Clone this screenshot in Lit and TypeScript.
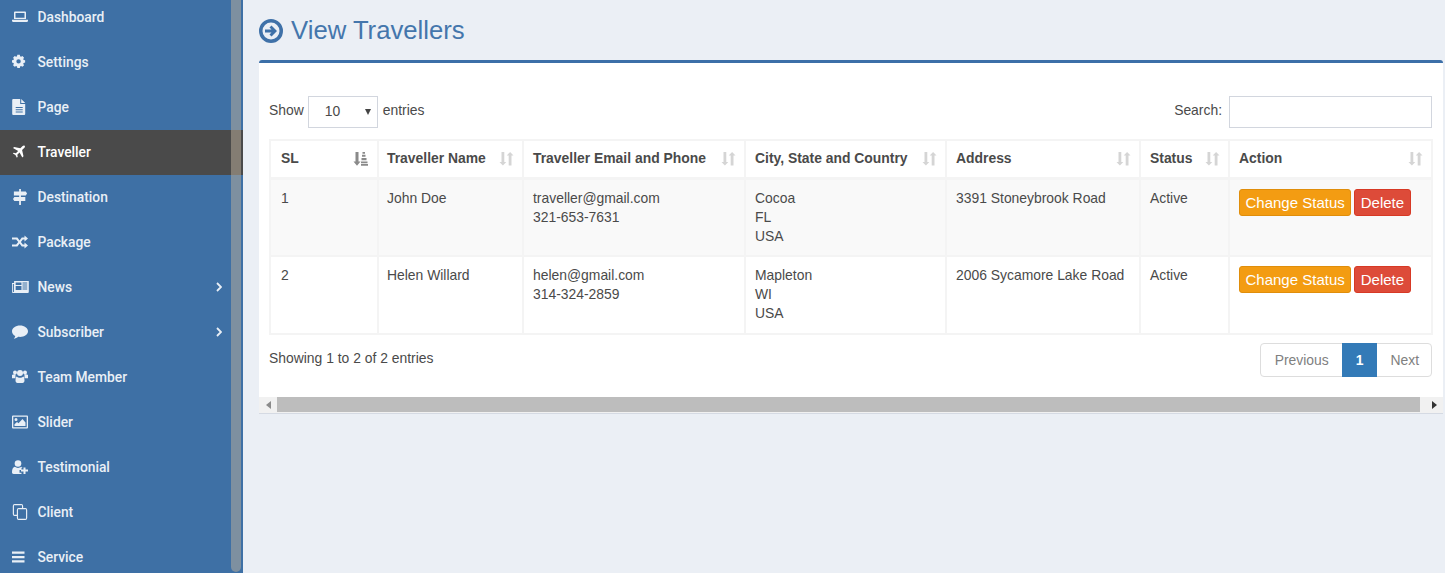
import { LitElement, html, css, svg } from "lit";
import { customElement } from "lit/decorators.js";

const icons: Record<string, unknown> = {
  laptop: svg`<path d="M3 2.500h10a1 1 0 0 1 1 1V10H2V3.500a1 1 0 0 1 1-1zM3.500 4v4.800h9V4zM0 10.800h16v1a1.300 1.300 0 0 1-1.300 1.200H1.300A1.300 1.300 0 0 1 0 11.800z" fill-rule="evenodd"/>`,
  cog: svg`<path fill-rule="evenodd" transform="translate(0 .8) scale(.82)" d="M6.500 0h3l.4 1.900 1.100.5 1.700-1 2 2.100-1 1.600.5 1.100 1.800.4v2.900l-1.800.4-.5 1.100 1 1.600-2 2.100-1.700-1-1.100.5-.4 1.800h-3l-.4-1.800-1.100-.5-1.700 1-2-2.100 1-1.600-.5-1.100L0 9.500V6.600l1.800-.4.5-1.100-1-1.600 2-2.100 1.700 1 1.100-.5zM8 5.300a2.700 2.700 0 1 0 0 5.400 2.700 2.700 0 0 0 0-5.400z"/>`,
  file: svg`<path fill-rule="evenodd" transform="translate(-.8 0)" d="M2 0h7v5h5v10a1 1 0 0 1-1 1H2a1 1 0 0 1-1-1V1a1 1 0 0 1 1-1zm8 0 4 4h-4zM4.500 8v1h7V8zm0 2.200v1h7v-1zm0 2.200v1h7v-1z"/>`,
  plane: svg`<path transform="translate(0 1) scale(.84)" d="M15 .8c.8.700.4 2-.5 2.900L12 6.100l1.700 7.300-1.400 1.400L9 8.900l-2.700 2.600.5 2.600-1 1-1.700-3.100L1 10.200l1-1 2.600.5L7.300 7 1.200 3.700l1.400-1.400 7.300 1.700L12.300 1.400c.9-.9 2-1.200 2.700-.6z"/>`,
  signs: svg`<path transform="translate(1 0) scale(.88 1)" d="M7 0h2v2.500h5.500l1.500 2-1.500 2H9v1.500h5v4H9V16H7v-4H1.500L0 10l1.500-2H7V6.500H1v-4h6z"/>`,
  random: svg`<path d="M12.500 1.500 16 4.500l-3.500 3V5.500h-1.700L8.900 8l1.900 2.500h1.700v-2L16 11.500l-3.500 3v-2h-2.700L7.600 9.600 5.400 12.500H0v-2h4.200L6.300 8 4.200 5.500H0v-2h5.400l2.200 2.900 2.200-2.900h2.700z"/>`,
  news: svg`<path fill-rule="evenodd" transform="scale(1.050 1)" d="M2 2h14v11a1 1 0 0 1-1 1H1a1 1 0 0 1-1-1V4h2zm1.500 1.500V6H9V3.500zm0 3.500v4H9V7zM10 3.500v1h4.500v-1zm0 2v1h4.500v-1zm0 2v1h4.500v-1zm0 2v1h4.500v-1zM.8 5v8h1V5z"/>`,
  comment: svg`<path d="M8 1.500c4.400 0 8 2.500 8 5.700s-3.600 5.700-8 5.700c-.6 0-1.200 0-1.800-.1C5 13.900 3.300 14.600 1.800 14.800c.7-.8 1.300-1.700 1.500-2.800C1.300 11 0 9.200 0 7.200 0 4 3.600 1.500 8 1.500z"/>`,
  users: svg`<circle cx="3" cy="3.500" r="2"/><circle cx="13" cy="3.500" r="2"/><circle cx="8" cy="4" r="3"/><path d="M0 6c.5-.5 1.400-.7 2.500-.7.600 0 .9.100 1.200.3-.3.900-.3 2.400-.1 3.600H0zM16 6c-.5-.5-1.400-.7-2.500-.7-.6 0-.9.100-1.200.3.300.9.300 2.400.1 3.600H16z"/><path d="M4.500 7.500c1 .8 2.200 1.300 3.500 1.300s2.500-.5 3.500-1.300c.7.500 1 2.500 1 4 0 1.200-.8 2.500-2 2.500h-5c-1.200 0-2-1.300-2-2.500 0-1.500.3-3.500 1-4z"/>`,
  picture: svg`<path fill-rule="evenodd" d="M1 1.500h14a1 1 0 0 1 1 1v11a1 1 0 0 1-1 1H1a1 1 0 0 1-1-1v-11a1 1 0 0 1 1-1zm.3 1.300v10.400h13.400V2.800zM4 4a1.500 1.500 0 1 1 0 3 1.500 1.500 0 0 1 0-3zM2.500 12v-1.800l2.500-2.200 1.500 1.300L10.500 5l3 3.500V12z"/>`,
  userplus: svg`<circle cx="6" cy="4.500" r="3.300"/><path d="M2.800 7.800C3.700 8.500 4.800 9 6 9s2.300-.5 3.200-1.200c.6.200 1.100.6 1.400 1H9.500v2.300h-2v2.700h2V15H1.600C.6 15 0 14.300 0 13.300c0-2.300.6-5 2.800-5.500z"/><path d="M11.500 8.500h2v2h2.500v2h-2.500v2.500h-2V12.500H9v-2h2.500z"/>`,
  copy: svg`<path fill-rule="evenodd" transform="translate(.8 0) scale(.9 1)" d="M2 0h7.500a2 2 0 0 1 2 2v2H14a2 2 0 0 1 2 2v8a2 2 0 0 1-2 2H6.500a2 2 0 0 1-2-2v-2H2a2 2 0 0 1-2-2V2a2 2 0 0 1 2-2zm-.7 1.300v9.400h3.200V6a2 2 0 0 1 2-2h3.700V1.300zm4.500 4v9.400h8.900V5.300z"/>`,
  bars: svg`<path d="M0 2.500h12.500v2.300H0zM0 6.900h12.500v2.300H0zM0 11.300h12.500v2.300H0z"/>`,
};

interface NavItem { label: string; icon: string; active?: boolean; arrow?: boolean; }
const nav: NavItem[] = [
  { label: "Dashboard", icon: "laptop" },
  { label: "Settings", icon: "cog" },
  { label: "Page", icon: "file" },
  { label: "Traveller", icon: "plane", active: true },
  { label: "Destination", icon: "signs" },
  { label: "Package", icon: "random" },
  { label: "News", icon: "news", arrow: true },
  { label: "Subscriber", icon: "comment", arrow: true },
  { label: "Team Member", icon: "users" },
  { label: "Slider", icon: "picture" },
  { label: "Testimonial", icon: "userplus" },
  { label: "Client", icon: "copy" },
  { label: "Service", icon: "bars" },
];

const columns = [
  { label: "SL", width: 108, sorted: true },
  { label: "Traveller Name", width: 145 },
  { label: "Traveller Email and Phone", width: 222 },
  { label: "City, State and Country", width: 201 },
  { label: "Address", width: 194 },
  { label: "Status", width: 89 },
  { label: "Action", width: 203 },
];

const rows = [
  { sl: "1", name: "John Doe", email: "traveller@gmail.com", phone: "321-653-7631", city: "Cocoa", state: "FL", address: "3391 Stoneybrook Road" },
  { sl: "2", name: "Helen Willard", email: "helen@gmail.com", phone: "314-324-2859", city: "Mapleton", state: "WI", address: "2006 Sycamore Lake Road" },
];

@customElement("app-root")
export class AppRoot extends LitElement {
  static styles = css`
    :host {
      display: flex;
      height: 573px;
      overflow: hidden;
      background: #ebeff5;
      font-family: "Liberation Sans", Arial, sans-serif;
      font-size: 13.900px;
      color: #4a4a4a;
    }

    .sidebar {
      position: relative;
      flex: 0 0 243px;
      height: 573px;
      overflow: hidden;
      background: #3e70a5;
    }

    .nav-list {
      margin: -5px 0 0;
      padding: 0;
      list-style: none;
    }

    .nav-item {
      display: flex;
      align-items: center;
      height: 45px;
      box-sizing: border-box;
      padding: 0 21px 2px 12px;
      color: #e9eff6;
      font-family: Roboto, "Liberation Sans", sans-serif;
      font-size: 13.800px;
      font-weight: 500;
    }

    .nav-item.active {
      background: #4a4a4a;
      color: #fff;
    }

    .nav-icon {
      flex: 0 0 16px;
      width: 16px;
      height: 16px;
      margin-right: 9.500px;
      fill: currentColor;
      overflow: visible;
    }

    .nav-label {
      flex: 1;
    }

    .nav-arrow {
      width: 6px;
      height: 10px;
      fill: none;
      stroke: currentColor;
      stroke-width: 1.800;
    }

    .side-scroll {
      position: absolute;
      top: 0;
      right: 2px;
      bottom: 0;
      width: 10px;
    }

    .side-thumb {
      height: 572px;
      border-radius: 0 0 5px 5px;
      background: rgba(190, 175, 155, 0.5);
    }

    .main {
      flex: 1;
      min-width: 0;
      padding: 0 2px 0 16px;
    }

    .title {
      display: flex;
      align-items: center;
      gap: 8px;
      height: 60px;
      margin: 0;
      color: #4476ac;
      font-size: 25.700px;
      font-weight: 400;
    }

    .title svg {
      width: 24px;
      height: 24px;
      margin-top: 1px;
    }

    .box {
      border-top: 3px solid #3c6fa8;
      border-radius: 3px 3px 0 0;
      border-bottom: 1px solid #d5dae3;
      background: #fff;
    }

    .box-body {
      height: 334px;
      padding: 33px 11px 0 10px;
      box-sizing: border-box;
    }

    .toolbar {
      display: flex;
      justify-content: space-between;
      align-items: flex-start;
      height: 32px;
      margin-bottom: 11px;
      line-height: 28px;
    }

    .length,
    .search {
      display: flex;
    }

    .select {
      display: flex;
      justify-content: space-between;
      align-items: center;
      width: 70px;
      height: 32px;
      box-sizing: border-box;
      margin: 0 5px 0 4px;
      padding: 0 6px 3px 16px;
      border: 1px solid #d2d6de;
    }

    .caret {
      width: 0;
      height: 0;
      margin-top: 3px;
      border-top: 6px solid #444;
      border-left: 3.500px solid transparent;
      border-right: 3.500px solid transparent;
    }

    .search-input {
      width: 203px;
      height: 32px;
      box-sizing: border-box;
      margin-left: 7px;
      border: 1px solid #d2d6de;
    }

    table {
      width: 1162px;
      table-layout: fixed;
      border-collapse: collapse;
      border: 1px solid #f4f4f4;
      border-bottom-width: 2px;
      border-top-width: 2px;
    }

    th,
    td {
      border: 2px solid #f4f4f4;
      border-top: 0;
      padding: 9px 8px 0 9px;
      vertical-align: top;
      text-align: left;
      line-height: 19px;
    }

    th:first-child,
    td:first-child {
      padding-left: 10px;
    }

    th:nth-child(2),
    td:nth-child(2) {
      padding-left: 8px;
    }

    th {
      padding-top: 8px;
      font-weight: 700;
      box-sizing: border-box;
      height: 38px;
      border-bottom-width: 3px;
    }

    td {
      height: 78px;
      box-sizing: border-box;
    }

    tr.odd td {
      background: #f9f9f9;
    }

    .th-inner {
      display: flex;
      justify-content: space-between;
      align-items: center;
    }

    .sort {
      flex: 0 0 15px;
      width: 15px;
      height: 15px;
      fill: #d5d5d5;
    }

    .sort.on {
      margin-right: 1px;
      fill: #8a8a8a;
    }

    .btn {
      display: inline-block;
      height: 27px;
      box-sizing: border-box;
      padding: 0 5.500px;
      border: 1px solid transparent;
      border-radius: 3px;
      color: #fff;
      font-size: 15px;
      line-height: 25px;
    }

    .btn-warn {
      background: #f39c12;
      border-color: #e08e0b;
      margin-right: 3px;
    }

    .btn-danger {
      background: #dd4b39;
      border-color: #d73925;
    }

    .actions {
      display: flex;
    }

    .footer {
      display: flex;
      justify-content: space-between;
      align-items: flex-start;
      margin-top: 8px;
    }

    .info {
      padding-top: 7px;
    }

    .pager {
      display: flex;
      height: 34px;
      border: 1px solid #ddd;
      border-radius: 4px;
      box-sizing: border-box;
      line-height: 32px;
      color: #808080;
    }

    .pager span {
      padding: 0 13px;
    }

    .pager .prev {
      padding-left: 14px;
    }

    .pager .next {
      padding-right: 12px;
    }

    .pager .current {
      margin: -1px 0;
      padding: 1px 14px;
      background: #337ab7;
      color: #fff;
      font-weight: 700;
    }

    .hscroll {
      display: flex;
      align-items: stretch;
      height: 16px;
      background: #f1f1f1;
    }

    .hscroll .end {
      display: flex;
      justify-content: center;
      align-items: center;
      flex: 0 0 18px;
    }

    .hscroll .end.right {
      flex: 0 0 23px;
      justify-content: flex-end;
      padding-right: 6px;
      box-sizing: border-box;
    }

    .hscroll .track {
      flex: 1;
      background: #bdbdbd;
      margin: 0 0 1px;
    }

    .tri-l {
      border-right: 5px solid #8b8b8b;
      border-top: 4px solid transparent;
      border-bottom: 4px solid transparent;
    }

    .tri-r {
      border-left: 5px solid #333;
      border-top: 4px solid transparent;
      border-bottom: 4px solid transparent;
    }
  `;

  sortIcon(on: boolean) {
    if (on) {
      return html`<svg class="sort on" viewBox="0 0 15 15">
        <path d="M2.500 1h3v9.500h2L4 14.700.5 10.500h2z" />
        <path d="M9.500 1h2.500v1.800H9.500zM9 3.800h3.500v2H9zM8.500 7h5v2.200h-5zM8 10.500h6.500v1.800H8zM8 13h7v1.800H8z" />
      </svg>`;
    }
    return html`<svg class="sort" viewBox="0 0 15 15">
      <path d="M2.500 1h2.800v10h2L3.900 14.500.5 11h2z" />
      <path d="M9.700 14.500h2.800v-10h2L11.100 1 7.700 4.500h2z" />
    </svg>`;
  }

  render() {
    return html`
      <aside class="sidebar">
        <ul class="nav-list">
          ${nav.map(
            (item) => html`
              <li class="nav-item ${item.active ? "active" : ""}">
                <svg class="nav-icon" viewBox="0 0 16 16">${icons[item.icon]}</svg>
                <span class="nav-label">${item.label}</span>
                ${item.arrow
                  ? html`<svg class="nav-arrow" viewBox="0 0 6 10"><path d="M1 1l4 4-4 4" /></svg>`
                  : ""}
              </li>
            `
          )}
        </ul>
        <div class="side-scroll"><div class="side-thumb"></div></div>
      </aside>

      <main class="main">
        <h1 class="title">
          <svg viewBox="0 0 24 24">
            <path
              fill="#3f71a8"
              fill-rule="evenodd"
              d="M12 0a12 12 0 1 1 0 24 12 12 0 0 1 0-24zm0 3.500a8.500 8.500 0 1 0 0 17 8.500 8.500 0 0 0 0-17zM12.500 6.500l5.500 5.500-5.500 5.500-2-2 2-2H6v-3h6.500l-2-2z"
            />
          </svg>
          View Travellers
        </h1>

        <section class="box">
          <div class="box-body">
            <div class="toolbar">
              <div class="length">
                Show
                <div class="select">10<span class="caret"></span></div>
                entries
              </div>
              <div class="search">Search:<div class="search-input"></div></div>
            </div>

            <table>
              <colgroup>
                ${columns.map((c) => html`<col style="width:${c.width}px" />`)}
              </colgroup>
              <thead>
                <tr>
                  ${columns.map(
                    (c) => html`<th>
                      <div class="th-inner">${c.label}${this.sortIcon(!!c.sorted)}</div>
                    </th>`
                  )}
                </tr>
              </thead>
              <tbody>
                ${rows.map(
                  (r, i) => html`
                    <tr class="${i % 2 === 0 ? "odd" : ""}">
                      <td>${r.sl}</td>
                      <td>${r.name}</td>
                      <td>${r.email}<br />${r.phone}</td>
                      <td>${r.city}<br />${r.state}<br />USA</td>
                      <td>${r.address}</td>
                      <td>Active</td>
                      <td>
                        <div class="actions">
                          <span class="btn btn-warn">Change Status</span>
                          <span class="btn btn-danger">Delete</span>
                        </div>
                      </td>
                    </tr>
                  `
                )}
              </tbody>
            </table>

            <div class="footer">
              <div class="info">Showing 1 to 2 of 2 entries</div>
              <div class="pager">
                <span class="prev">Previous</span>
                <span class="current">1</span>
                <span class="next">Next</span>
              </div>
            </div>
          </div>

          <div class="hscroll">
            <div class="end"><span class="tri-l"></span></div>
            <div class="track"></div>
            <div class="end right"><span class="tri-r"></span></div>
          </div>
        </section>
      </main>
    `;
  }
}
